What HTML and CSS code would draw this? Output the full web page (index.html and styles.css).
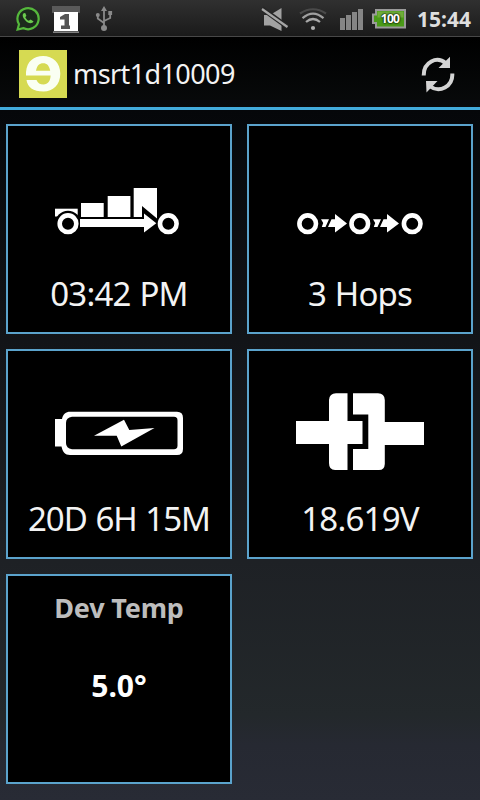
FILE: index.html
```
<!DOCTYPE html>
<html lang="en">
<head>
    <meta charset="UTF-8">
    <meta name="viewport" content="width=device-width, initial-scale=1.0">
    <title>msrt1d10009</title>
    <link rel="stylesheet" href="styles.css">
</head>
<body>
    <div class="status-bar">
        <div class="status-left">
            <svg width="26" height="28" viewBox="15 5 26 28">
                <path d="M17.6 29.5 L19 24.2 A10.6 10.6 0 1 1 23.2 28.1 Z" fill="#1c2a1c" stroke="#55b83c" stroke-width="2.2"/>
                <path d="M23.6 13.2 C22 14.5 22.4 17 25 20 C28 23.4 31.5 24.6 33.6 21.6 L30.6 19.4 L28.8 20.8 C27 20 26 18.8 25.3 17.2 L26.4 15.8 L25.2 13 Z" fill="#6bcb4e"/>
            </svg>
            <svg width="28" height="28" viewBox="52 5 28 28">
                <rect x="52" y="6" width="28" height="7" fill="#5a5a5a"/>
                <rect x="54" y="12" width="24" height="19" fill="#fff"/>
                <rect x="53" y="31.5" width="26" height="1.3" fill="#999"/>
                <path d="M60 17 L65 14 H69 V25.500 H70 V29 H61 V25.500 H64.500 V19.500 H60 Z" fill="#555"/>
            </svg>
            <svg width="18" height="28" viewBox="95 5 18 28">
                <g fill="none" stroke="#8a8a8a" stroke-width="1.8">
                    <path d="M104 9 V28 M97.8 15 V18.5 L104 23 M110.2 13 V18 L104 21"/>
                </g>
                <g fill="#8a8a8a">
                    <path d="M101 11 L104 6 L107 11 Z"/>
                    <circle cx="97.8" cy="15" r="2"/>
                    <rect x="108.3" y="11" width="3.8" height="4"/>
                    <circle cx="104" cy="28" r="3"/>
                </g>
            </svg>
        </div>
        <div class="status-right">
            <svg class="mute" width="28" height="28" viewBox="261 5 28 28">
                <path d="M264 15 H270 L281.500 8 V31 L270 25.500 H264 Z" fill="#a2a2a2"/>
                <path d="M262 8.500 L287.500 27" stroke="#262626" stroke-width="5"/>
                <path d="M262 9 L287.500 27" stroke="#a6a6a6" stroke-width="2.200"/>
            </svg>
            <svg class="wifi" width="30" height="28" viewBox="298 5 30 28">
                <g fill="none" stroke-width="2.200">
                    <path d="M300 13.500 Q313 5 326 13.500" stroke="#4a4a4a"/>
                    <path d="M302.500 18.200 Q313 9 323.500 18.200" stroke="#a0a0a0"/>
                    <path d="M306 22 Q313 16 320 22" stroke="#a8a8a8"/>
                </g>
                <circle cx="313" cy="28" r="2.100" fill="#b0b0b0"/>
            </svg>
            <svg class="signal" width="24" height="28" viewBox="340 5 24 28">
                <g fill="#858585">
                    <rect x="340" y="18" width="5" height="12"/>
                    <rect x="346" y="15" width="5" height="15"/>
                    <rect x="352" y="12" width="5" height="18"/>
                    <rect x="358" y="9" width="5" height="21"/>
                </g>
            </svg>
            <div class="battery">
                <svg width="35" height="20" viewBox="372 9.500 35 20">
                    <path d="M376 10.500 H405 V28 H376 V23.500 H373 V15 H376 Z" fill="#4a9a18" stroke="#9a9a9a" stroke-width="2"/>
                    <rect x="377.500" y="12" width="26" height="6" fill="#6fae38"/>
                </svg>
                <span class="battery-level">100</span>
            </div>
            <span class="clock">15:44</span>
        </div>
    </div>

    <div class="action-bar">
        <svg class="logo" width="48" height="48" viewBox="0 0 48 48">
            <rect width="48" height="48" fill="#d6da52"/>
            <path fill-rule="evenodd" d="M7 25.500 V22 C8 11 15 6 24 6 C34 6 41.300 13 41.300 23.500 C41.300 35 34 41.500 24.500 41.500 C14 41.500 8.500 37 7.500 30 H17.500 C18.800 33 21 34.500 24.500 34.500 C29 34.500 31.400 31 31.600 25.500 H7 Z M17 20.700 H31.200 C30.200 15.600 28 13.200 24.200 13.200 C20.300 13.200 18 15.500 17 20.700 Z" fill="#fafff2"/>
        </svg>
        <h1>msrt1d10009</h1>
        <svg class="refresh" width="36" height="38" viewBox="420 55 36 38">
            <g fill="none" stroke="#d4d4d4" stroke-width="4">
                <path d="M423.700 75.500 C423.300 62 437 55.500 446 63.500"/>
                <path d="M452.300 73.500 C453 86.500 439.500 93.500 429.500 86"/>
            </g>
            <path d="M450 56.800 V68 H438.500 Z M426 81 H437.500 L426.500 92.500 Z" fill="#d4d4d4"/>
        </svg>
    </div>

    <div class="tiles">
        <div class="tile">
            <svg width="128" height="128" viewBox="0 0 128 128">
                <g fill="#fff">
                    <rect x="0" y="64.700" width="22.700" height="7.800"/>
                    <rect x="26" y="59" width="22.700" height="14"/>
                    <rect x="52.700" y="52" width="22.700" height="21"/>
                    <path d="M78.700 44 H102 V74.500 L87 62 V73 H78.700 Z"/>
                    <circle cx="13" cy="79.700" r="13" fill="#000"/>
                    <path d="M25 75 H89 V69.500 L101.300 79.200 L89 88.500 V83 H25 Z"/>
                </g>
                <g fill="#000" stroke="#fff" stroke-width="4.600">
                    <circle cx="13" cy="79.700" r="8.300"/>
                    <circle cx="113.300" cy="79.700" r="8.300"/>
                </g>
            </svg>
            <p class="value">03:42 PM</p>
        </div>
        <div class="tile">
            <svg width="128" height="128" viewBox="0 0 128 128">
                <g fill="none" stroke="#fff" stroke-width="4.600">
                    <circle cx="11.700" cy="79.700" r="8.300"/>
                    <circle cx="63.800" cy="79.700" r="8.300"/>
                    <circle cx="116.200" cy="79.700" r="8.300"/>
                </g>
                <g fill="#fff">
                    <path d="M25 75.300 H33 L29.500 83 H25.800 L27.200 79 Z M35.500 75.300 H39 V70 L51 79.500 L39 88.500 V83 H32 Z"/>
                    <path d="M77 75.300 H85 L81.500 83 H77.800 L79.200 79 Z M87.500 75.300 H91 V70 L103 79.500 L91 88.500 V83 H84 Z"/>
                </g>
            </svg>
            <p class="value">3 Hops</p>
        </div>
        <div class="tile">
            <svg width="128" height="128" viewBox="0 0 128 128">
                <path d="M0 50 H7 C8 45 11 42.700 15 42.700 H122 Q128 42.700 128 49 V80 Q128 86 122 86 H15 C10 86 7.500 82.500 6.500 77.500 H0 Z" fill="#fff"/>
                <path d="M17 47.800 H119 Q122.500 47.800 122.500 51.500 V76.500 Q122.500 80.300 119 80.300 H17 Q11 79.500 11 74 V54 Q11 48.500 17 47.800 Z" fill="#000"/>
                <path d="M39 66.800 L69 50.700 L74.300 61 L99.500 59 L66.300 77.500 L61.700 66.800 Z" fill="#fff"/>
            </svg>
            <p class="value duration">20D 6H 15M</p>
        </div>
        <div class="tile">
            <svg width="128" height="128" viewBox="0 0 128 128">
                <g fill="#fff">
                    <path d="M0 52 H33 V31 Q33.500 24.300 40 24.300 H51.500 V52 H66.500 V75 H51.500 V101 H39 Q33 101 33 94 V75 H0 Z"/>
                    <path d="M57 24.300 H82 Q88.500 24.300 88.800 31 V53 H128 V76 H88.800 V95 Q88.500 101 83 101 H57 V80 H72.300 V45.500 H57 Z"/>
                </g>
            </svg>
            <p class="value">18.619V</p>
        </div>
        <div class="tile tile-text">
            <h2>Dev Temp</h2>
            <p class="reading">5.0°</p>
        </div>
    </div>
</body>
</html>
```
FILE: styles.css
```
body {
    margin: 0;
    height: 800px;
    overflow: hidden;
    color: #f3f3f3;
    font-family: "Noto Sans", "Open Sans", sans-serif;
    background: linear-gradient(#000 0, #05070a 110px, #121418 340px, #1e2125 560px, #23282b 715px, #262932 745px, #282b35 800px);
}
svg {
    display: block;
    flex: none;
}
h1, h2, p {
    margin: 0;
}
.status-bar {
    display: flex;
    justify-content: space-between;
    box-sizing: border-box;
    height: 37px;
    padding: 5px 9px 0 15px;
    background: linear-gradient(#303030, #1a1a1a);
    border-bottom: 1px solid #484848;
}
.status-left {
    display: flex;
    gap: 11px;
}
.status-left svg:last-child {
    margin-left: 4px;
}
.status-right {
    display: flex;
    height: 28px;
}
.mute {
    margin-right: 9px;
}
.wifi {
    margin-right: 12px;
}
.signal {
    margin-right: 8px;
}
.battery {
    position: relative;
    margin: 4px 10px 0 0;
}
.battery-level {
    position: absolute;
    top: 0;
    left: 2px;
    width: 32px;
    text-align: center;
    color: #fff;
    font-size: 12px;
    line-height: 20px;
    font-weight: bold;
    letter-spacing: -0.7px;
    text-shadow: 0 0 2px #000, 0 0 2px #000;
}
.clock {
    width: 54px;
    color: #dedede;
    font-size: 21px;
    line-height: 29px;
    font-weight: bold;
}
.action-bar {
    display: flex;
    align-items: center;
    box-sizing: border-box;
    height: 73px;
    padding: 3px 24px 0 19px;
    background: linear-gradient(#000, #080a0b);
    border-bottom: 3px solid #42abdb;
}
.action-bar h1 {
    flex: 1;
    margin-left: 6px;
    font-size: 27px;
    font-weight: normal;
    letter-spacing: -0.6px;
}
.tiles {
    display: grid;
    grid-template-columns: 226px 226px;
    grid-auto-rows: 210px;
    gap: 15px;
    padding: 14px 6px;
}
.tile {
    display: flex;
    flex-direction: column;
    align-items: center;
    box-sizing: border-box;
    padding-top: 18px;
    background: #000;
    border: 2px solid #5ba3cc;
}
.value {
    font-size: 33px;
    line-height: 44px;
    letter-spacing: -0.8px;
    word-spacing: 1px;
    white-space: nowrap;
}
.duration {
    letter-spacing: -1px;
}
.tile-text h2 {
    color: #bdbdbd;
    font-size: 27px;
    line-height: 28px;
    letter-spacing: -0.2px;
}
.reading {
    margin-top: 47px;
    color: #fff;
    font-size: 30px;
    line-height: 34px;
    font-weight: bold;
}
```
